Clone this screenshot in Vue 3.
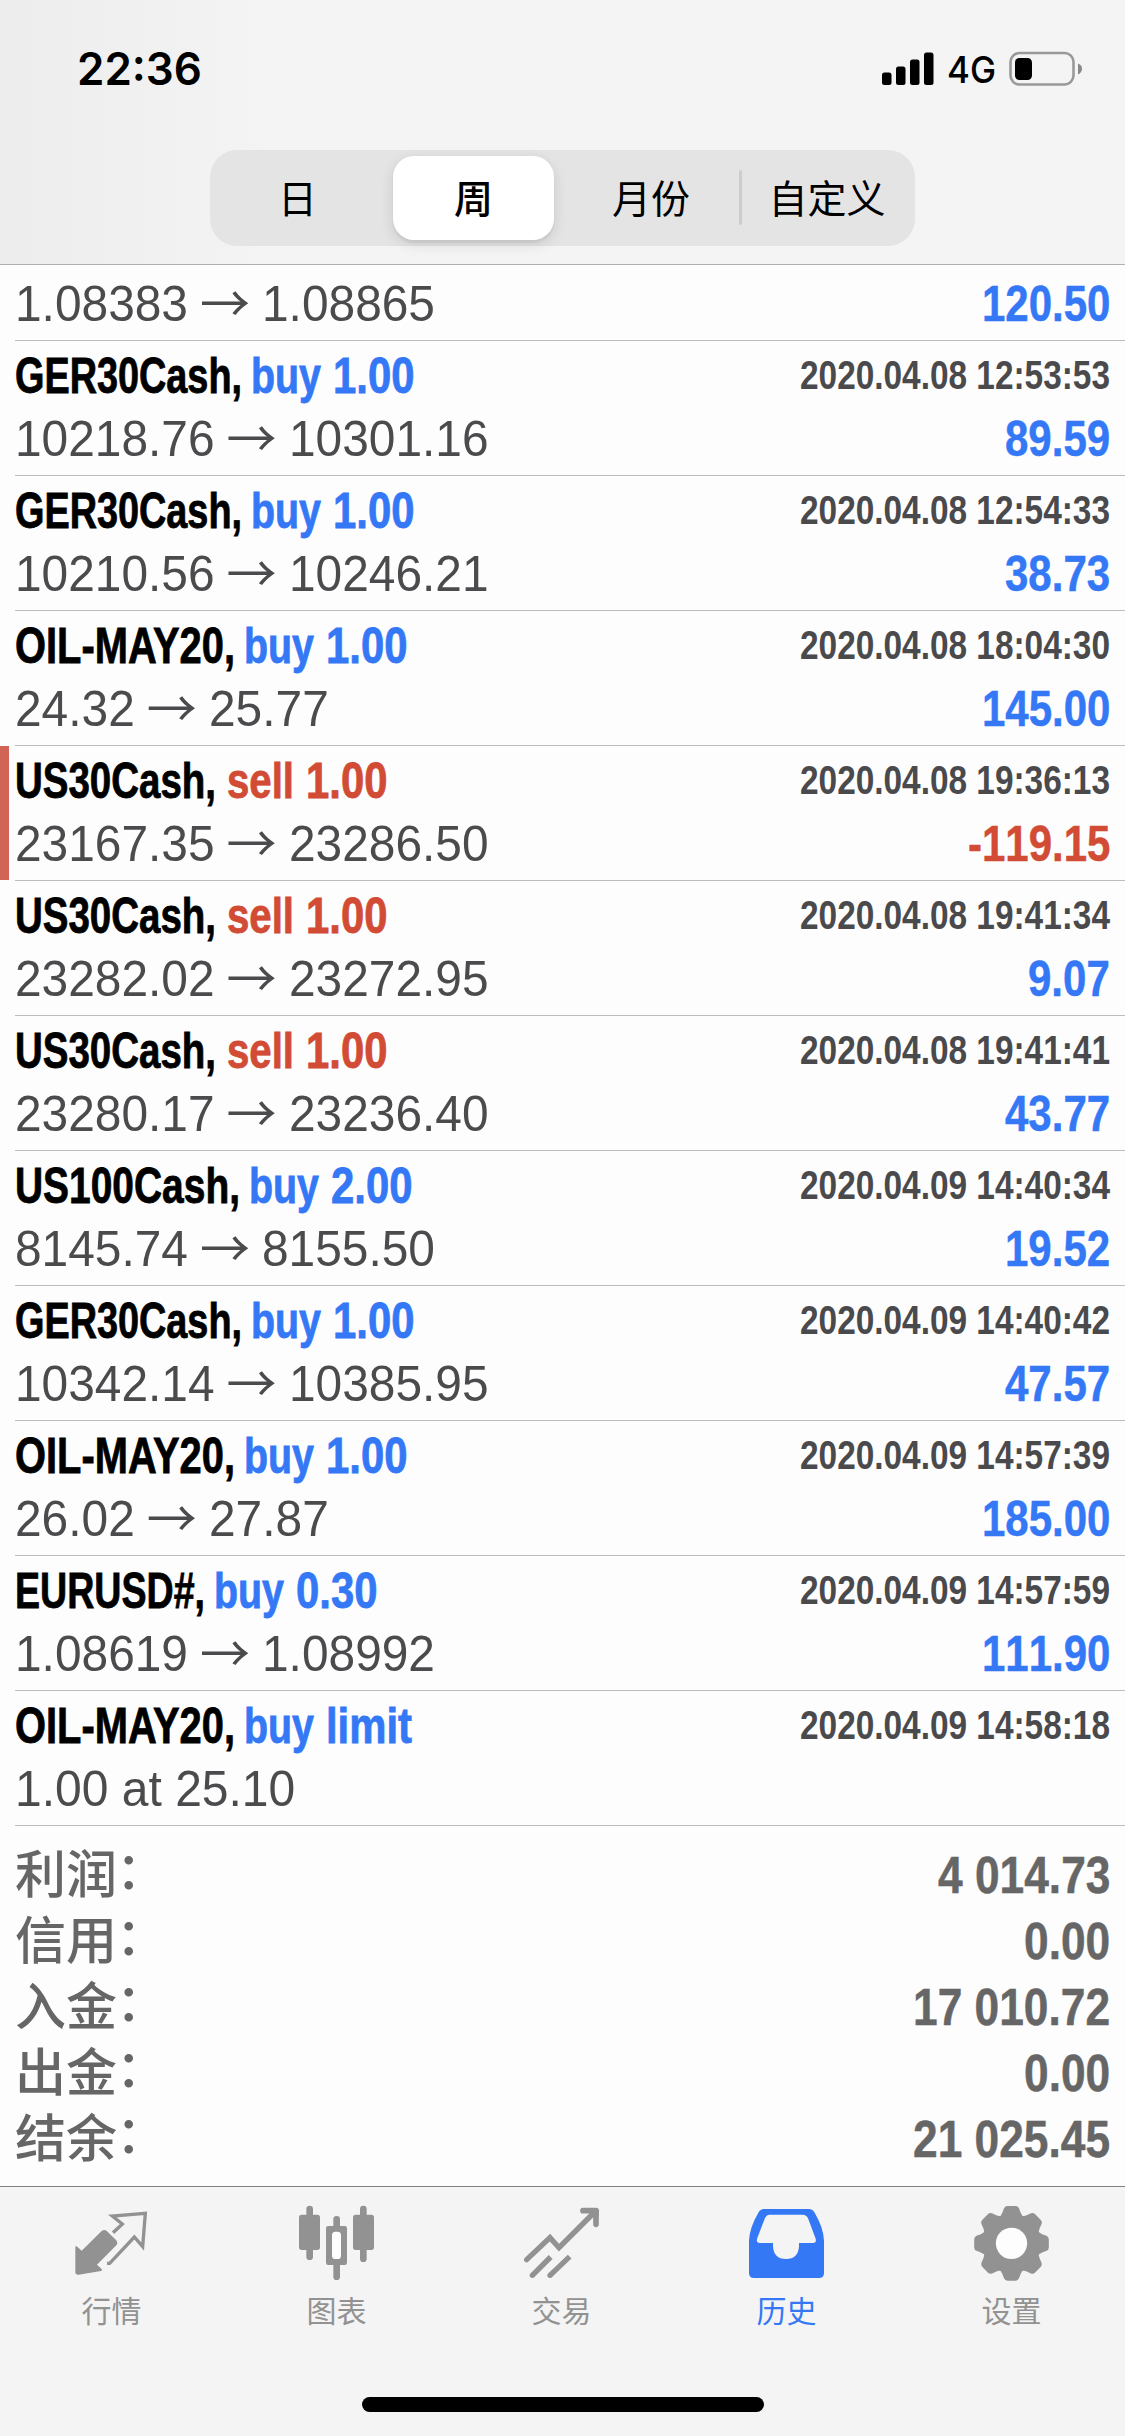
<script setup>
const segments = ['日', '周', '月份', '自定义']
const activeSegment = 1

const nameWidths = {
  'GER30Cash': 227,
  'OIL-MAY20': 220,
  'US30Cash': 201,
  'US100Cash': 225,
  'EURUSD#': 190,
}
const actionWidths = { buy: 70, sell: 67, limit: 86 }

const deals = [
  { name: 'GER30Cash', side: 'buy', volume: '1.00', time: '2020.04.08 12:53:53', from: '10218.76', to: '10301.16', profit: '89.59' },
  { name: 'GER30Cash', side: 'buy', volume: '1.00', time: '2020.04.08 12:54:33', from: '10210.56', to: '10246.21', profit: '38.73' },
  { name: 'OIL-MAY20', side: 'buy', volume: '1.00', time: '2020.04.08 18:04:30', from: '24.32', to: '25.77', profit: '145.00' },
  { name: 'US30Cash', side: 'sell', volume: '1.00', time: '2020.04.08 19:36:13', from: '23167.35', to: '23286.50', profit: '-119.15', loss: true },
  { name: 'US30Cash', side: 'sell', volume: '1.00', time: '2020.04.08 19:41:34', from: '23282.02', to: '23272.95', profit: '9.07' },
  { name: 'US30Cash', side: 'sell', volume: '1.00', time: '2020.04.08 19:41:41', from: '23280.17', to: '23236.40', profit: '43.77' },
  { name: 'US100Cash', side: 'buy', volume: '2.00', time: '2020.04.09 14:40:34', from: '8145.74', to: '8155.50', profit: '19.52' },
  { name: 'GER30Cash', side: 'buy', volume: '1.00', time: '2020.04.09 14:40:42', from: '10342.14', to: '10385.95', profit: '47.57' },
  { name: 'OIL-MAY20', side: 'buy', volume: '1.00', time: '2020.04.09 14:57:39', from: '26.02', to: '27.87', profit: '185.00' },
  { name: 'EURUSD#', side: 'buy', volume: '0.30', time: '2020.04.09 14:57:59', from: '1.08619', to: '1.08992', profit: '111.90' },
  { name: 'OIL-MAY20', side: 'buy', volume: 'limit', time: '2020.04.09 14:58:18', note: '1.00 at 25.10' },
]

const totals = [
  { label: '利润', value: '4 014.73' },
  { label: '信用', value: '0.00' },
  { label: '入金', value: '17 010.72' },
  { label: '出金', value: '0.00' },
  { label: '结余', value: '21 025.45' },
]

const tabs = [
  { id: 'quotes', label: '行情' },
  { id: 'chart', label: '图表' },
  { id: 'trade', label: '交易' },
  { id: 'history', label: '历史' },
  { id: 'settings', label: '设置' },
]

function squeeze(el, ratioFor) {
  const natural = el.getBoundingClientRect().width
  if (!natural) return
  const ratio = ratioFor(natural)
  el.style.transform = `scaleX(${ratio})`
  el.style.marginRight = `${natural * (ratio - 1)}px`
}
// v-fit: condense text to a pixel width; v-condense: condense by a ratio
const vFit = { mounted: (el, { value }) => squeeze(el, (n) => value / n) }
const vCondense = { mounted: (el, { value }) => squeeze(el, () => value) }
</script>

<template>
  <div class="screen">
    <header class="top">
      <div class="status">
        <span v-fit="125" class="cond clock">22:36</span>
        <div class="status-right">
          <svg class="signal" width="52" height="34" viewBox="0 0 52 34">
            <rect x="0" y="20.5" width="9.5" height="12.5" rx="2.5" />
            <rect x="14" y="14.5" width="9.5" height="18.5" rx="2.5" />
            <rect x="28" y="7.5" width="9.5" height="25.5" rx="2.5" />
            <rect x="42" y="0.5" width="9.5" height="32.5" rx="2.5" />
          </svg>
          <span v-fit="49" class="cond network">4G</span>
          <svg width="74" height="36" viewBox="0 0 74 36">
            <rect x="1.5" y="2" width="63" height="31.5" rx="9" fill="none" stroke="#999" stroke-width="2.6" />
            <rect x="6" y="7" width="17" height="22" rx="4.5" />
            <path d="M69 12.5Q73 14 73 17.8T69 23.5Z" fill="#888" />
          </svg>
        </div>
      </div>
      <div class="segmented">
        <div
          v-for="(s, i) in segments"
          :key="s"
          class="segment"
          :class="{ active: i === activeSegment, divided: i === 3 }"
        >{{ s }}</div>
      </div>
    </header>

    <main class="list">
      <section class="deal partial">
        <div class="line second">
          <div class="prices">
            <span v-condense="0.957" class="cond">1.08383</span>
            <span class="arrow">→</span>
            <span v-condense="0.957" class="cond">1.08865</span>
          </div>
          <span v-condense="0.84" class="cond profit">120.50</span>
        </div>
      </section>

      <section v-for="d in deals" :key="d.time" class="deal" :class="{ losing: d.loss }">
        <div class="line first">
          <div class="title">
            <span v-fit="nameWidths[d.name]" class="cond">{{ d.name }},</span>
            <span class="action" :class="d.side">
              <span v-fit="actionWidths[d.side]" class="cond">{{ d.side }}</span>
              <span v-fit="actionWidths[d.volume] || 81.5" class="cond">{{ d.volume }}</span>
            </span>
          </div>
          <span v-fit="310" class="cond time">{{ d.time }}</span>
        </div>
        <div class="line second">
          <div v-if="d.note" class="prices">
            <span v-condense="0.96" class="cond">{{ d.note }}</span>
          </div>
          <div v-else class="prices">
            <span v-condense="0.957" class="cond">{{ d.from }}</span>
            <span class="arrow">→</span>
            <span v-condense="0.957" class="cond">{{ d.to }}</span>
          </div>
          <span v-if="d.profit" v-condense="0.84" class="cond profit" :class="{ loss: d.loss }">{{ d.profit }}</span>
        </div>
      </section>

      <section class="totals">
        <div v-for="t in totals" :key="t.label" class="total">
          <span class="total-label">{{ t.label }}<span class="colon">：</span></span>
          <span v-condense="0.852" class="cond total-value">{{ t.value }}</span>
        </div>
      </section>
    </main>

    <nav class="tabbar">
      <div class="tabs">
        <div v-for="t in tabs" :key="t.id" class="tab" :class="{ current: t.id === 'history' }">
          <svg v-if="t.id === 'quotes'" class="icon" viewBox="102 105 225 225">
            <path class="fill" d="M110 229L125 242L185 183Q193 177 201 184L228 210Q235 218 229 226L171 284L185 297Q188 301 183 303L116 314Q106 315 106 306V232Q106 227 110 229Z" />
            <path class="line-icon" stroke-width="10" d="M219 188L247 162L217 138L316 130L308 230L283 201L209 280H201" />
          </svg>
          <svg v-else-if="t.id === 'chart'" class="icon" viewBox="777 105 225 225">
            <path class="line-icon round" stroke-width="20" d="M809 117V260M890 148V176M890 276V320M970 117V266" />
            <rect class="fill" x="777" y="134" width="63" height="106" rx="8" />
            <rect class="fill" x="939" y="134" width="63" height="106" rx="8" />
            <rect x="874" y="183" width="31" height="86" fill="#fdfdfd" />
            <path class="fill" fill-rule="evenodd" d="M866 168H914Q921 168 921 175V278Q921 285 914 285H865Q858 285 858 278V175Q858 168 866 168ZM886 185Q876 185 876 196V257Q876 267 886 267H893Q903 267 903 257V196Q903 185 893 185Z" />
          </svg>
          <svg v-else-if="t.id === 'trade'" class="icon" viewBox="132 105 225 225">
            <path class="line-icon round" stroke-width="16" d="M140 269L210 203L237 233L344 126" />
            <path class="line-icon round" stroke-width="17" stroke-linejoin="round" d="M309 122H348V163" />
            <path class="fill" d="M330 115H352L356 120V138L340 142Z" />
            <path class="line-icon" stroke-width="16" d="M157 316L212 261M210 316L269 260" />
            <circle class="fill" cx="157" cy="316" r="8" />
            <circle class="fill" cx="210" cy="316" r="8" />
          </svg>
          <svg v-else-if="t.id === 'history'" class="icon" viewBox="807 105 225 225">
            <path class="fill" fill-rule="evenodd" d="M852 117H987Q998 117 1004 128Q1031 174 1032 212V309Q1032 324 1017 324H822Q807 324 807 309V212Q808 174 835 128Q841 117 852 117ZM869 134Q860 134 855 144L832 204Q827 219 839 219H879V229Q881 267 918 267Q955 267 957 229V219H999Q1010 219 1007 206L984 145Q979 134 969 134Z" />
          </svg>
          <svg v-else class="icon" viewBox="222 105 225 225">
            <g class="fill">
              <circle cx="334.500" cy="220" r="88" />
              <path v-for="a in 8" :key="a" :transform="`rotate(${a * 45} 334.5 220)`" d="M294 145Q303 138 307 128L312 115Q315 108 323 108H346Q354 108 357 115L362 128Q366 138 375 145Z" />
            </g>
            <circle cx="334.500" cy="220" r="47" fill="#fdfdfd" />
          </svg>
          <span class="tab-label">{{ t.label }}</span>
        </div>
      </div>
      <div class="home"></div>
    </nav>
  </div>
</template>

<style>
body { background: #fdfdfd; }
</style>

<style scoped>
.screen {
  width: 1125px;
  height: 2436px;
  display: flex;
  flex-direction: column;
  overflow: hidden;
  background: #fdfdfd;
  color: #000;
  font-family: "Liberation Sans", "Noto Sans CJK SC", sans-serif;
}
.cond {
  display: inline-block;
  flex: none;
  white-space: pre;
  transform-origin: left center;
}

/* Header */
.top {
  box-sizing: border-box;
  height: 265px;
  flex: none;
  display: flex;
  flex-direction: column;
  align-items: center;
  border-bottom: 1px solid #b0b0b0;
  background: linear-gradient(90deg, #ededed 0, #f4f4f4 290px, #f4f4f4 100%);
}
.status {
  box-sizing: border-box;
  width: 100%;
  height: 150px;
  padding: 39px 42px 0 77px;
  display: flex;
  justify-content: space-between;
  align-items: flex-start;
}
.clock {
  font: 600 45px/60px Inter, sans-serif;
}
.status-right {
  display: flex;
  align-items: flex-start;
  padding-top: 12px;
}
.signal { margin-top: 1px; }
.network {
  margin-left: 13px;
  font: 500 37px/38px Inter, sans-serif;
}
.status-right svg:last-child { margin-left: 13px; }
.segmented {
  width: 705px;
  height: 96px;
  display: flex;
  align-items: center;
  border-radius: 27px;
  background: #e4e4e5;
}
.segment {
  position: relative;
  width: 176px;
  height: 84px;
  text-align: center;
  font: 400 39px/81px "Noto Sans CJK SC", sans-serif;
}
.segment:first-child { width: 175px; }
.segment.active {
  width: 161px;
  margin: 0 9px 0 8px;
  border-radius: 21px;
  background: #fff;
  font-weight: 500;
  box-shadow: 0 4px 14px rgba(0, 0, 0, 0.12), 0 3px 2px rgba(0, 0, 0, 0.05);
}
.segment.divided::before {
  content: "";
  position: absolute;
  left: 0;
  top: 14px;
  width: 3px;
  height: 55px;
  border-radius: 2px;
  background: #cdcdcf;
}

/* Deals */
.list {
  height: 1921px;
  flex: none;
}
.deal {
  position: relative;
  box-sizing: border-box;
  height: 135px;
  padding: 10px 15px 0;
}
.deal.partial {
  height: 76px;
  padding-top: 14px;
}
.deal::after {
  content: "";
  position: absolute;
  left: 15px;
  right: 0;
  bottom: 0;
  height: 1px;
  background: #bcbcbe;
}
.deal.losing::before {
  content: "";
  position: absolute;
  left: 0;
  top: 0;
  width: 9px;
  height: 134px;
  background: #d16454;
}
.line {
  display: flex;
  justify-content: space-between;
  align-items: flex-start;
}
.first { height: 50px; }
.second {
  height: 50px;
  margin-top: 13px;
}
.partial .second { margin-top: 0; }
.title {
  display: flex;
  font: 700 50px/50px "Liberation Sans", sans-serif;
  -webkit-text-stroke: 0.8px currentColor;
}
.action {
  display: flex;
  gap: 12px;
  margin-left: 9px;
}
.buy { color: #3478f6; }
.sell {
  margin-left: 11px;
  color: #d14b35;
}
.time {
  font: 700 40px/48px "Liberation Sans", sans-serif;
  font-kerning: none;
  color: #4a4a4d;
}
.prices {
  display: flex;
  font: 400 50px/50px "Liberation Sans", sans-serif;
  font-kerning: none;
  color: #4b4b4e;
}
.arrow {
  width: 50px;
  margin: 0 12px;
  font: 400 50px/43px "Noto Sans CJK SC", sans-serif;
}
.profit {
  font: 700 50px/50px "Liberation Sans", sans-serif;
  font-kerning: none;
  -webkit-text-stroke: 0.5px currentColor;
  color: #3478f6;
}
.loss { color: #d14b35; }

/* Totals */
.totals {
  padding: 16px 15px 0;
}
.total {
  height: 66px;
  display: flex;
  justify-content: space-between;
  color: #666;
}
.total-label {
  font: 500 51px/58px "Noto Sans CJK SC", sans-serif;
}
.colon {
  position: relative;
  top: -4px;
  left: -1px;
}
.total-value {
  font: 700 52px/66px "Liberation Sans", sans-serif;
  font-kerning: none;
  -webkit-text-stroke: 0.5px currentColor;
}

/* Tab bar */
.tabbar {
  box-sizing: border-box;
  flex: 1;
  display: flex;
  flex-direction: column;
  align-items: center;
  justify-content: space-between;
  padding-bottom: 24px;
  border-top: 1px solid #808080;
  background: #f4f4f4;
}
.tabs {
  width: 100%;
  display: flex;
  padding-top: 18px;
}
.tab {
  width: 225px;
  display: flex;
  flex-direction: column;
  align-items: center;
  color: #929292;
}
.current { color: #3478f6; }
.icon {
  width: 75px;
  height: 75px;
  margin-left: -2px;
  overflow: visible;
}
.fill { fill: currentColor; }
.line-icon {
  fill: none;
  stroke: currentColor;
}
.round { stroke-linecap: round; }
.tab-label {
  margin: 7px 2px 0 0;
  font: 400 30px/44px "Noto Sans CJK SC", sans-serif;
}
.home {
  width: 402px;
  height: 15px;
  border-radius: 8px;
  background: #000;
}
</style>
